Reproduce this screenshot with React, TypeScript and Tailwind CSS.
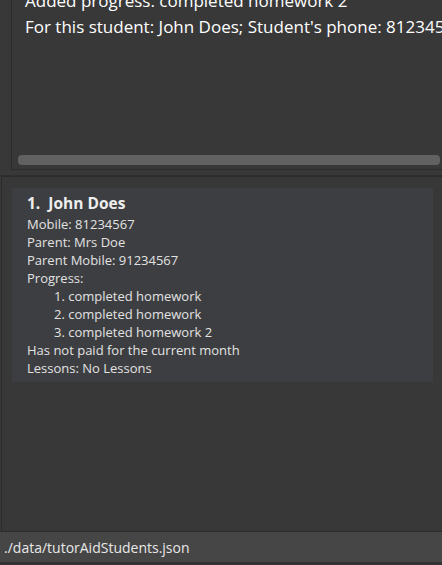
import React from "react";

const progress = ["completed homework", "completed homework", "completed homework 2"];

export default function App() {
  return (
    <div
      className="w-[442px] h-[565px] overflow-hidden bg-[#383838] flex flex-col"
      style={{ fontFamily: '"Open Sans", "Noto Sans", sans-serif' }}
    >
      {/* Result display */}
      <div className="h-[170px] pl-[11px]">
        <div className="h-full w-[520px] border-l border-b border-[#2b2b2b] flex flex-col overflow-hidden">
          <div className="-mt-[12px] pl-[13px] text-[17px] leading-[26px] text-white whitespace-nowrap">
            <div>Added progress: completed homework 2</div>
            <div>For this student: John Does; Student's phone: 81234567</div>
          </div>
          <div className="flex-1" />
          <div className="ml-[6px] mb-[4px] w-[422px] h-[10px] rounded-[4px] bg-[#616161]" />
        </div>
      </div>

      {/* Gap lines */}
      <div className="h-[6px] border-b border-[#2e2e2e]" />

      {/* Student list */}
      <div className="h-[356px] ml-[1px] border-l border-t border-b border-[#2b2b2b] pl-[10px] pt-[11px] pr-[9px]">
        <div className="bg-[#3d3e41] px-[15px] pt-[3px] pb-[5px] text-[13px] leading-[18px] text-[#e2e2e2]">
          <div className="text-[15.5px] leading-[24px] font-bold text-[#eeeeee]">1.&nbsp; John Does</div>
          <div>Mobile: 81234567</div>
          <div>Parent: Mrs Doe</div>
          <div>Parent Mobile: 91234567</div>
          <div>Progress:</div>
          {progress.map((p, i) => (
            <div key={i} className="pl-[27px]">
              {i + 1}. {p}
            </div>
          ))}
          <div>Has not paid for the current month</div>
          <div>Lessons: No Lessons</div>
        </div>
      </div>

      {/* Status bar */}
      <div className="h-[30px] bg-[#464646] pl-[4px] flex items-center text-[14px] text-[#e8e8e8]">
        ./data/tutorAidStudents.json
      </div>
      <div className="flex-1 bg-[#333333]" />
    </div>
  );
}
